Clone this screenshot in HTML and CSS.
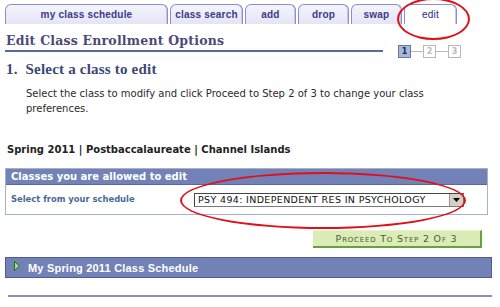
FILE: index.html
```html
<!DOCTYPE html>
<html>
<head>
<meta charset="utf-8">
<link rel="stylesheet" href="styles.css">
</head>
<body>
<div class="page">
  <nav class="tabs">
    <div class="tab t1">my class schedule</div>
    <div class="tab t2">class search</div>
    <div class="tab t3">add</div>
    <div class="tab t4">drop</div>
    <div class="tab t5">swap</div>
    <div class="tab t6 active">edit</div>
  </nav>

  <div class="titlerow">
    <h1 class="title">Edit Class Enrollment Options</h1>
    <div class="steps">
      <span class="step on">1</span><span class="link"></span><span class="step">2</span><span class="link"></span><span class="step">3</span>
    </div>
  </div>

  <h2 class="subtitle">1.&nbsp; Select a class to edit</h2>
  <p class="instr">Select the class to modify and click Proceed to Step 2 of 3 to change your class preferences.</p>

  <div class="term">Spring 2011 | Postbaccalaureate | Channel Islands</div>

  <div class="panel">
    <div class="panel-head">Classes you are allowed to edit</div>
    <div class="panel-body">
      <span class="label">Select from your schedule</span>
      <div class="select">
        <span class="select-text">PSY 494: INDEPENDENT RES IN PSYCHOLOGY</span>
        <span class="select-btn"><svg width="7" height="4" viewBox="0 0 7 4"><path d="M0 0h7L3.5 4z" fill="#000"/></svg></span>
      </div>
    </div>
  </div>

  <div class="btnrow">
    <div class="proceed">Proceed To Step 2 Of 3</div>
  </div>

  <div class="collapse">
    <svg class="tri" width="6" height="10" viewBox="0 0 6 10"><path d="M0.5 0.5L5.5 5L0.5 9.5z" fill="#9be08a" stroke="#2a6a20" stroke-width="1"/></svg>
    <span>My Spring 2011 Class Schedule</span>
  </div>

  <div class="bottomline"></div>

  <div class="ring ring1"></div>
  <div class="ring ring2"></div>
</div>
</body>
</html>
```

FILE: styles.css
```css
html, body { margin: 0; padding: 0; background: #fff; }
.page {
  position: relative;
  width: 500px;
  height: 307px;
  overflow: hidden;
  font-family: "DejaVu Sans", Verdana, sans-serif;
}
.tabs {
  display: flex;
  gap: 2px;
  padding: 4px 0 0 5px;
  height: 20px;
}
.tab {
  box-sizing: border-box;
  height: 20px;
  border: 1px solid #8c8cd0;
  border-bottom: none;
  border-radius: 6px 6px 0 0;
  background: linear-gradient(#f4f4fc, #e4e4f6);
  color: #3a3a8a;
  font-family: "Liberation Sans", Arial, sans-serif;
  font-weight: bold;
  font-size: 10px;
  letter-spacing: 0.2px;
  text-align: center;
  line-height: 19px;
  box-shadow: inset -1px 0 0 #c8c8ee;
}
.t1 { width: 163px; }
.t2 { width: 73px; }
.t3 { width: 51px; }
.t4 { width: 51px; }
.t5 { width: 51px; }
.t6 { width: 53px; }
.tab.active { background: #fff; font-weight: normal; color: #2a2a8a; }

.titlerow {
  display: flex;
  align-items: flex-end;
  margin-top: 8px;
  padding-left: 5px;
}
.title {
  margin: 0;
  width: 377px;
  font-family: "DejaVu Serif", Georgia, serif;
  font-weight: bold;
  font-size: 12.5px;
  letter-spacing: 0.2px;
  color: #4a4a78;
  padding-left: 1px;
  border-bottom: 2px solid #5a68a0;
  line-height: 18px;
}
.steps {
  display: flex;
  align-items: center;
  margin-left: 15px;
  margin-bottom: -6px;
}
.step {
  box-sizing: border-box;
  width: 13px;
  height: 13px;
  border: 1px solid #b8b8b8;
  font-size: 8px;
  line-height: 11px;
  text-align: center;
  color: #bbb;
  font-weight: bold;
  background: #fff;
}
.step.on {
  background: #a8b8d8;
  border-color: #6878a8;
  color: #1a2a5a;
}
.link {
  width: 12px;
  height: 1px;
  background: #b8b8b8;
}

.subtitle {
  margin: 8px 0 0 6px;
  font-family: "Liberation Serif", Georgia, serif;
  font-weight: bold;
  font-size: 15px;
  letter-spacing: 0.2px;
  color: #3a4878;
  line-height: 18px;
}
.instr {
  margin: 8px 0 0 26px;
  width: 400px;
  font-size: 10px;
  line-height: 15px;
  color: #2a2a2a;
}
.term {
  margin: 27px 0 0 7px;
  font-size: 10px;
  font-weight: bold;
  color: #222;
  line-height: 13px;
}
.panel {
  margin: 12px 0 0 5px;
  width: 481px;
  border: 1px solid #a8b0cc;
}
.panel-head {
  background: #7282b6;
  border-bottom: 1px solid #5868a0;
  color: #fff;
  font-size: 10px;
  font-weight: bold;
  padding-left: 5px;
  height: 15px;
  line-height: 15px;
}
.panel-body {
  display: flex;
  align-items: center;
  height: 29px;
  padding-left: 5px;
}
.label {
  width: 182px;
  color: #4a6a98;
  font-size: 8.4px;
  font-weight: bold;
  margin-top: -2px;
}
.select {
  display: flex;
  width: 270px;
  height: 14px;
  box-sizing: border-box;
  border: 1px solid #7a7a7a;
  border-top-color: #444;
  border-left-color: #444;
  background: #fff;
  margin-left: 1px;
}
.select-text {
  flex: 1;
  font-size: 9.5px;
  line-height: 12px;
  padding-left: 3px;
  color: #111;
  letter-spacing: 0.35px;
  white-space: nowrap;
  overflow: hidden;
}
.select-btn {
  width: 13px;
  background: #d4d0c8;
  border-left: 1px solid #999;
  display: flex;
  align-items: center;
  justify-content: center;
}
.btnrow {
  display: flex;
  justify-content: flex-end;
  padding-right: 18px;
  margin-top: 15px;
}
.proceed {
  box-sizing: border-box;
  width: 169px;
  height: 18px;
  background: #dcecb6;
  border-right: 2px solid #6aa040;
  border-bottom: 2px solid #6aa040;
  border-top: 1px solid #e8f2d0;
  color: #4a5a3a;
  font-size: 9.5px;
  font-variant: small-caps;
  letter-spacing: 0.8px;
  text-align: center;
  line-height: 15px;
}
.collapse {
  display: flex;
  align-items: center;
  gap: 8px;
  margin: 9px 0 0 5px;
  width: 487px;
  height: 21px;
  box-sizing: border-box;
  background: #7282b6;
  border: 1px solid #4c5c98;
  padding-left: 8px;
  color: #fff;
  font-family: "Liberation Sans", Arial, sans-serif;
  font-weight: bold;
  font-size: 11px;
  letter-spacing: 0.2px;
}
.tri { margin-top: -3px; }
.bottomline {
  margin: 17px 0 0 8px;
  width: 484px;
  height: 2px;
  background: #8890b8;
}
.ring {
  position: absolute;
  border: 2px solid #e0101a;
  border-radius: 50%;
  box-sizing: border-box;
}
.ring1 { left: 397px; top: -2px; width: 73px; height: 42px; }
.ring2 { left: 180px; top: 172px; width: 286px; height: 57px; }
```
